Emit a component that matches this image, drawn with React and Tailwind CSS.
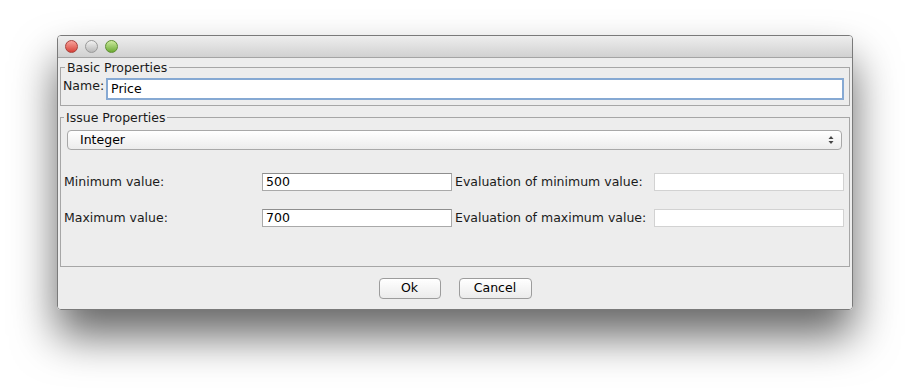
import React from 'react';

const font = { fontFamily: '"DejaVu Sans", "Liberation Sans", sans-serif' };

function TrafficLight({ from, to, ring }) {
  return (
    <span
      className={`block w-[13px] h-[13px] rounded-full bg-gradient-to-b ${from} ${to} border ${ring}`}
    />
  );
}

function ValueRow({ label, value, evalLabel }) {
  return (
    <div className="flex items-center h-[18px]">
      <div className="w-[199px] pl-[1px] text-[12.5px] text-[#1a1a1a]">{label}</div>
      <div className="w-[190px] h-[18px] bg-white border border-[#a9a9a9] border-t-[#8e8e8e] pl-[3px] text-[12.5px] leading-[16px] text-black">
        {value}
      </div>
      <div className="w-[202px] pl-[3px] text-[12.5px] text-[#1a1a1a]">{evalLabel}</div>
      <div className="w-[190px] h-[18px] bg-white border border-[#d2d2d2]" />
    </div>
  );
}

export default function App() {
  return (
    <div className="min-h-[388px] w-[910px] bg-white pt-[35px] pl-[57px]" style={font}>
      <div className="w-[796px] rounded-[4px] border border-[#7a7a7a] shadow-[0_26px_44px_rgba(0,0,0,0.6)] overflow-hidden">
        {/* title bar */}
        <div className="h-[22px] bg-gradient-to-b from-[#eeeeee] to-[#d1d1d1] border-b border-[#a4a4a4] flex items-center gap-[7px] pl-[7px]">
          <TrafficLight from="from-[#f7a19b]" to="to-[#d63f38]" ring="border-[#a8413b]" />
          <TrafficLight from="from-[#f2f2f2]" to="to-[#b9b9b9]" ring="border-[#999999]" />
          <TrafficLight from="from-[#cdeb9d]" to="to-[#6cab30]" ring="border-[#5f8f33]" />
        </div>

        {/* body */}
        <div className="bg-[#ededed] px-[2px] pt-[2px]">
          <fieldset className="border border-[#a6a6a6] px-[2px] pb-[5px]">
            <legend className="ml-[2px] px-[2px] text-[12.5px] leading-[15px] text-[#1a1a1a]">Basic Properties</legend>
            <div className="flex items-start pt-[3px]">
              <span className="text-[12.5px] leading-[14px] text-[#1a1a1a] pt-[1px] pr-[2px]">Name:</span>
              <div className="flex-1 mr-[3px] h-[22px] bg-white border-2 border-[#86a9d3] pl-[3px] text-[12.5px] leading-[18px] text-black">
                Price
              </div>
            </div>
          </fieldset>

          <fieldset className="mt-[4px] border border-[#a6a6a6] px-[0px] pb-[39px]">
            <legend className="ml-[3px] px-[2px] text-[12.5px] leading-[15px] text-[#1a1a1a]">Issue Properties</legend>
            <div className="ml-[6px] mr-[7px] mt-[5px] h-[20px] rounded-[4px] border border-[#a8a8a8] bg-gradient-to-b from-white to-[#ececec] flex items-center justify-between pl-[12px] pr-[7px]">
              <span className="text-[12.5px] text-black">Integer</span>
              <svg width="6" height="10" viewBox="0 0 6 10">
                <path d="M3 1 L5.5 4 L0.5 4 Z" fill="#444" />
                <path d="M3 9 L5.5 6 L0.5 6 Z" fill="#444" />
              </svg>
            </div>
            <div className="mt-[23px] flex flex-col gap-[18px] pl-[2px]">
              <ValueRow label="Minimum value:" value="500" evalLabel="Evaluation of minimum value:" />
              <ValueRow label="Maximum value:" value="700" evalLabel="Evaluation of maximum value:" />
            </div>
          </fieldset>

          {/* buttons */}
          <div className="flex justify-center gap-[18px] pt-[11px] pb-[10px]">
            <button className="w-[62px] h-[21px] rounded-[4px] border border-[#9c9c9c] bg-gradient-to-b from-white to-[#ebebeb] text-[12.5px] text-black">
              Ok
            </button>
            <button className="w-[73px] h-[21px] rounded-[4px] border border-[#9c9c9c] bg-gradient-to-b from-white to-[#ebebeb] text-[12.5px] text-black">
              Cancel
            </button>
          </div>
        </div>
      </div>
    </div>
  );
}
